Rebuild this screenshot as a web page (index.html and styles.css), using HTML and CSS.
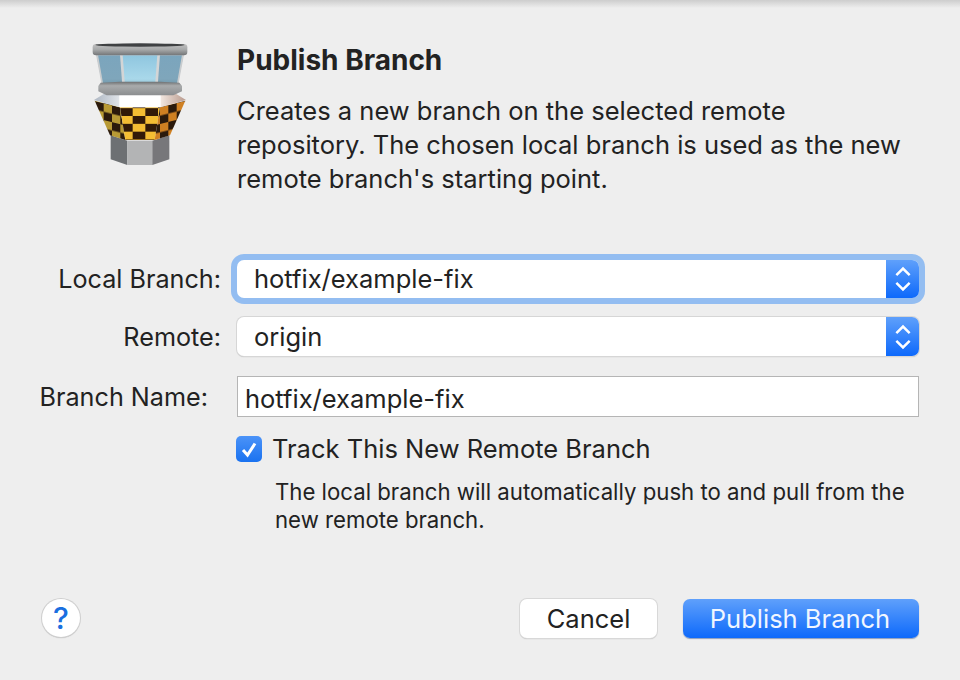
FILE: index.html
```html
<!DOCTYPE html>
<html lang="en">
<head>
  <meta charset="UTF-8" />
  <title>Publish Branch</title>
  <link rel="stylesheet" href="styles.css">
</head>
<body>
  <div class="dialog">
    <div class="head">
      <svg class="logo" viewBox="0 0 420 450" width="140" height="150">
        <defs>
          <linearGradient id="roof" x1="0" y1="0" x2="0" y2="1">
            <stop offset="0" stop-color="#c2c2c2"/><stop offset="0.5" stop-color="#a6a8a9"/><stop offset="1" stop-color="#737577"/>
          </linearGradient>
          <linearGradient id="collar" x1="0" y1="0" x2="0" y2="1">
            <stop offset="0" stop-color="#6d6f71"/><stop offset="0.3" stop-color="#a9abac"/><stop offset="1" stop-color="#8b8d8f"/>
          </linearGradient>
          <linearGradient id="glassMid" x1="0" y1="0" x2="0" y2="1">
            <stop offset="0" stop-color="#8fc6df"/><stop offset="0.75" stop-color="#a9d8ea"/><stop offset="1" stop-color="#8db8c8"/>
          </linearGradient>
          <linearGradient id="glassSide" x1="0" y1="0" x2="0" y2="1">
            <stop offset="0" stop-color="#7ba5bd"/><stop offset="0.75" stop-color="#7fa6bb"/><stop offset="1" stop-color="#6f93a3"/>
          </linearGradient>
          <linearGradient id="band" x1="0" y1="0" x2="1" y2="0">
            <stop offset="0" stop-color="#aeb7c3"/><stop offset="0.27" stop-color="#dfe3e8"/><stop offset="0.28" stop-color="#fff"/><stop offset="0.72" stop-color="#fff"/><stop offset="0.73" stop-color="#f1e5de"/><stop offset="1" stop-color="#b8998c"/>
          </linearGradient>
          <pattern id="checkMid" x="150" y="211" width="76" height="47" patternUnits="userSpaceOnUse">
            <rect width="76" height="47" fill="#f4bd33"/>
            <rect x="38" width="38" height="23.5" fill="#321a08"/>
            <rect y="23.5" width="38" height="23.5" fill="#321a08"/>
          </pattern>
          <pattern id="checkLeft" width="50" height="50" patternUnits="userSpaceOnUse" patternTransform="translate(76 214) skewY(14)">
            <rect width="50" height="50" fill="#2b1a0c"/>
            <rect x="25" width="25" height="25" fill="#b89a35"/>
            <rect y="25" width="25" height="25" fill="#b89a35"/>
          </pattern>
          <pattern id="checkRight" width="50" height="50" patternUnits="userSpaceOnUse" patternTransform="translate(270 232) skewY(-14)">
            <rect width="50" height="50" fill="#2b1a0c"/>
            <rect width="25" height="25" fill="#cf8022"/>
            <rect x="25" y="25" width="25" height="25" fill="#cf8022"/>
          </pattern>
        </defs>
        <!-- base -->
        <polygon points="122,316 172,332 172,405 122,388" fill="#6d7073"/>
        <polygon points="172,332 247,332 247,405 172,405" fill="#b3b4b5"/>
        <polygon points="247,332 298,316 298,388 247,405" fill="#77777a"/>
        <!-- checker -->
        <polygon points="74,212 150,232 166,330 120,316" fill="url(#checkLeft)"/>
        <polygon points="150,232 270,232 254,330 166,330" fill="url(#checkMid)"/>
        <polygon points="270,232 346,212 300,316 254,330" fill="url(#checkRight)"/>
        <!-- band -->
        <polygon points="72,210 105,190 315,190 348,210 270,232 150,232" fill="url(#band)"/>
        <!-- glass -->
        <polygon points="80,76 155,76 162,170 96,160" fill="url(#glassSide)"/>
        <polygon points="155,76 265,76 258,170 162,170" fill="url(#glassMid)"/>
        <polygon points="265,76 340,76 324,160 258,170" fill="url(#glassSide)"/>
        <polygon points="78,74 84,74 99,160 94,160" fill="#c9ccce"/>
        <polygon points="150,74 158,74 165,168 157,168" fill="#d3d5d6"/>
        <polygon points="262,74 270,74 263,168 255,168" fill="#d3d5d6"/>
        <polygon points="336,74 342,74 326,160 321,160" fill="#c9ccce"/>
        <!-- collar -->
        <polygon points="92,158 150,155 270,155 328,158 336,168 336,184 310,196 110,196 85,184 85,168" fill="url(#collar)"/>
        <!-- roof -->
        <rect x="68" y="42" width="284" height="34" rx="10" fill="url(#roof)"/>
        <ellipse cx="210" cy="45" rx="134" ry="5" fill="#3f4143"/>
      </svg>
      <div class="intro">
        <h1>Publish Branch</h1>
        <p>Creates a new branch on the selected remote repository. The chosen local branch is used as the new remote branch's starting point.</p>
      </div>
    </div>

    <div class="form">
      <label class="lbl lbl-first">Local Branch:</label>
      <div class="select focused">
        <span class="select-val">hotfix/example-fix</span>
        <span class="stepper">
          <svg viewBox="0 0 32 40" width="32" height="38"><path d="M9 16 L16 9 L23 16 M9 24 L16 31 L23 24" fill="none" stroke="#fff" stroke-width="2.6"/></svg>
        </span>
      </div>

      <label class="lbl lbl-second">Remote:</label>
      <div class="select second">
        <span class="select-val">origin</span>
        <span class="stepper">
          <svg viewBox="0 0 32 40" width="32" height="38"><path d="M9 16 L16 9 L23 16 M9 24 L16 31 L23 24" fill="none" stroke="#fff" stroke-width="2.6"/></svg>
        </span>
      </div>

      <label class="lbl lbl-name">Branch Name:</label>
      <div class="textbox">hotfix/example-fix</div>

      <div class="check-row">
        <span class="checkbox">
          <svg viewBox="0 0 26 26" width="26" height="26"><path d="M7 14 L11.5 19 L19 7.5" fill="none" stroke="#fff" stroke-width="3"/></svg>
        </span>
        <span>Track This New Remote Branch</span>
      </div>
      <p class="note">The local branch will automatically push to and pull from the new remote branch.</p>
    </div>

    <div class="foot">
      <button class="help">?</button>
      <div class="actions">
        <button class="btn">Cancel</button>
        <button class="btn primary">Publish Branch</button>
      </div>
    </div>
  </div>
</body>
</html>
```

FILE: styles.css
```css
:root {
  --bg: #eeeeee;
  --txt: #222222;
  --blue: #1a6fe0;
}
* { box-sizing: border-box; }
html, body {
  margin: 0;
  height: 100%;
}
body {
  background: linear-gradient(#cdcdcd, #eeeeee 8px);
  font-family: 'Inter', sans-serif;
  color: var(--txt);
  overflow: hidden;
}
.dialog {
  height: 680px;
  padding-top: 30px;
}
.head {
  display: flex;
  padding-left: 70px;
}
.logo {
  flex: none;
  display: block;
}
.intro {
  margin-left: 27px;
  width: 675px;
}
h1 {
  font-size: 28px;
  line-height: 32px;
  font-weight: 700;
  margin: 14px 0 0 0;
}
.intro p {
  font-size: 25.5px;
  line-height: 34px;
  margin: 18px 0 0 0;
}
/* --- FORM --- */
.form {
  display: grid;
  grid-template-columns: 221px 1fr;
  column-gap: 16px;
  padding-right: 41px;
  margin-top: 64px;
  font-size: 25.5px;
}
.lbl {
  text-align: right;
  font-size: 25.2px;
  line-height: 38px;
  height: 38px;
}
.lbl-name { padding-right: 13px; line-height: 43px; height: 41px; margin-top: 20px; }
.lbl-second { margin-top: 19px; line-height: 40px; height: 39px; }
.select {
  display: flex;
  justify-content: space-between;
  height: 38px;
  background: #fff;
  border-radius: 7px;
  box-shadow: 0 0 0 1px #d6d6d6, 0 1px 1px #aaa;
  overflow: hidden;
}
.select.second { margin-top: 19px; height: 39px; }
.select.second .select-val { line-height: 40px; }
.select.focused {
  box-shadow: 0 0 0 6px #93bdf1;
}
.select-val {
  padding-left: 17px;
  line-height: 38px;
}
.stepper {
  width: 33px;
  display: flex;
  align-items: center;
  justify-content: center;
  background: linear-gradient(#5fa0fb, #0d69fb);
}
.textbox {
  height: 41px;
  margin-top: 20px;
  line-height: 44px;
  padding-left: 7px;
  background: #fff;
  border: 1px solid #b5b5b5;
}
.check-row {
  grid-column: 2;
  display: flex;
  align-items: center;
  gap: 10px;
  margin-top: 19px;
  line-height: 26px;
}
.checkbox {
  width: 26px;
  height: 26px;
  margin-left: -1px;
  border-radius: 5px;
  background: linear-gradient(#4b93f8, #1a72f0);
}
.checkbox svg { display: block; }
.note {
  grid-column: 2;
  margin: 16px 0 0 38px;
  font-size: 22.2px;
  line-height: 28px;
  width: 640px;
}
/* --- BUTTONS --- */
.foot {
  position: absolute;
  left: 42px;
  right: 41px;
  bottom: 42px;
  display: flex;
  justify-content: space-between;
}
.actions {
  display: flex;
  gap: 26px;
}
.btn {
  height: 39px;
  width: 137px;
  padding: 0;
  border: none;
  border-radius: 7px;
  background: #fff;
  color: var(--txt);
  font-family: inherit;
  font-size: 25.5px;
  box-shadow: 0 0 0 1px #d8d8d8, 0 1px 1px #aaa;
}
.btn.primary {
  width: 236px;
  padding-right: 2px;
  background: linear-gradient(#5fa0fb, #0d69fb);
  color: #f1f6ff;
  box-shadow: 0 1px 1px #8a9cbc;
}
.help {
  width: 38px;
  height: 38px;
  padding: 0;
  border: none;
  border-radius: 50%;
  background: #fff;
  color: var(--blue);
  font-family: inherit;
  font-size: 30px;
  font-weight: 500;
  box-shadow: 0 0 0 1px #cfcfcf, 0 1px 1px #aaa;
}
```
